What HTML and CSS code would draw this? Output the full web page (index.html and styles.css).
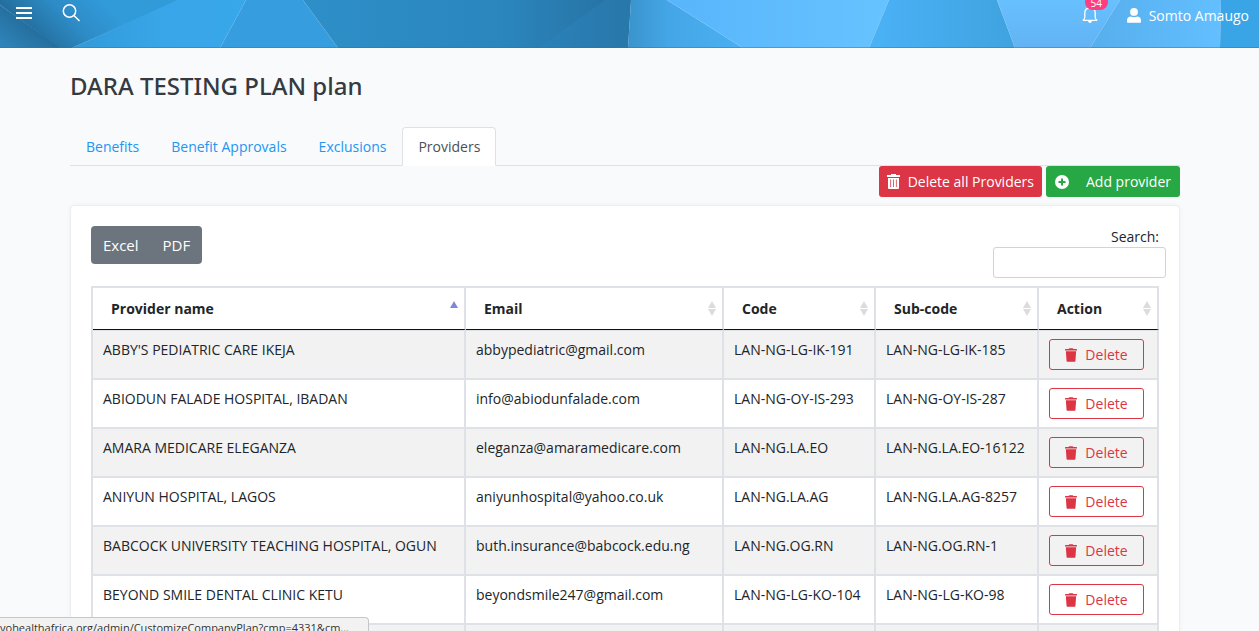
FILE: index.html
```html
<!DOCTYPE html>
<html lang="en">
<head>
<meta charset="utf-8">
<title>DARA TESTING PLAN plan</title>
<link rel="stylesheet" href="styles.css">
</head>
<body>
<svg class="sprite" aria-hidden="true">
  <symbol id="trash" viewBox="0 0 14 16"><path d="M4.200 1 4.600.4Q4.900 0 5.400 0h3.200q.5 0 .8.400l.4.600H13.500q.5 0 .5.500V2.700H0V1.500Q0 1 .5 1zM1 3.700h12l-.8 10.900q-.1 1.400-1.500 1.400H3.300q-1.400 0-1.500-1.400z"/></symbol>
</svg>
<div class="page">
  <header class="topbar">
    <svg class="topbar-art" viewBox="0 0 1259 48" preserveAspectRatio="none" aria-hidden="true">
      <defs>
        <linearGradient id="g1" gradientUnits="userSpaceOnUse" x1="30" y1="30" x2="80" y2="-20"><stop offset="0" stop-color="#246f9f"/><stop offset=".5" stop-color="#2d8bc5"/><stop offset="1" stop-color="#319ad9"/></linearGradient>
        <linearGradient id="g2" gradientUnits="userSpaceOnUse" x1="8" y1="48" x2="36" y2="12"><stop offset="0" stop-color="#2e83b8"/><stop offset="1" stop-color="#1f6592"/></linearGradient>
        <linearGradient id="g3"><stop offset="0" stop-color="#2e8fc8"/><stop offset=".6" stop-color="#2b86be"/><stop offset="1" stop-color="#26709f"/></linearGradient>
        <linearGradient id="g4"><stop offset="0" stop-color="#3a93cc"/><stop offset=".35" stop-color="#44a6e6"/><stop offset="1" stop-color="#4ab0f3"/></linearGradient>
        <linearGradient id="g5"><stop offset="0" stop-color="#58b5fb"/><stop offset="1" stop-color="#67c3ff"/></linearGradient>
        <linearGradient id="g6"><stop offset="0" stop-color="#4bb2f6"/><stop offset="1" stop-color="#40a3e0"/></linearGradient>
        <linearGradient id="g7" x2="0" y2="1"><stop offset="0" stop-color="#68c0ff"/><stop offset="1" stop-color="#62b3f3"/></linearGradient>
        <linearGradient id="g8"><stop offset="0" stop-color="#57aeec"/><stop offset="1" stop-color="#63bfff"/></linearGradient>
        <linearGradient id="g9"><stop offset="0" stop-color="#329ad8"/><stop offset=".5" stop-color="#38a5e8"/><stop offset="1" stop-color="#38a8eb"/></linearGradient>
      </defs>
      <path fill="url(#g1)" d="M0 0H180L72 48H60L0 5z"/>
      <path fill="url(#g2)" d="M0 5 61 48H0z"/>
      <path fill="url(#g9)" d="M177 0h69l-26 48H72z"/>
      <path fill="#369edf" d="M246 0h57l35 48H220z"/>
      <path fill="url(#g3)" d="M303 0h328l-3 48H338z"/>
      <path fill="#2d89c2" opacity=".3" d="M605 0h26l-3 48h-90z"/>
      <path fill="url(#g4)" d="M631 0h36l76 48H628z"/>
      <path fill="url(#g5)" d="M667 0h222l-20 48H743z"/>
      <path fill="url(#g6)" d="M889 0h108l18 48H869z"/>
      <path fill="url(#g7)" d="M997 0h123l-30 48h-75z"/>
      <path fill="url(#g8)" d="M1120 0h101l-1 48h-130z"/>
      <path fill="#39a4e6" d="M1221 0h38v48h-39z"/>
      <path fill="#1f78b4" opacity=".45" d="M0 47h1259v1H0z"/>
    </svg>
    <div class="topbar-group">
      <button class="icon-btn" aria-label="Menu"><svg width="16" height="12" viewBox="0 0 16 12"><path fill="#fff" d="M0 0h16v2H0zM0 5h16v2H0zM0 10h16v2H0z"/></svg></button>
      <button class="icon-btn" aria-label="Search"><svg width="18" height="18" viewBox="0 0 18 18" fill="none" stroke="#fff" stroke-width="1.500"><circle cx="7.500" cy="7" r="6.200"/><path d="m12 11.500 5.500 5.500"/></svg></button>
    </div>
    <div class="topbar-group topbar-user">
      <button class="icon-btn bell" aria-label="Notifications">
        <svg width="16" height="18" viewBox="0 0 16 18"><path fill="none" stroke="#fff" stroke-width="1.300" d="M.8 14.300Q2.800 13.500 2.800 11V7Q2.800 2 8 2t5.200 5v4q0 2.500 2 3.300z"/><path fill="#fff" d="M6 15h4q-.5 2-2 2t-2-2z"/></svg>
        <span class="badge">54</span>
      </button>
      <a class="user" href="#"><svg width="14" height="15" viewBox="0 0 14 15"><path fill="#fff" d="M7 0a3.800 3.800 0 1 1 0 7.800A3.800 3.800 0 0 1 7 0zM0 14v-1.500Q0 9 3.500 8.500 7 10 10.500 8.500 14 9 14 12.500V14q0 .7-.8.700H.8Q0 14.700 0 14z"/></svg>Somto Amaugo</a>
    </div>
  </header>

  <main class="container">
    <h1 class="title">DARA TESTING PLAN plan</h1>
    <nav class="tabs">
      <a class="tab" href="#">Benefits</a>
      <a class="tab" href="#">Benefit Approvals</a>
      <a class="tab" href="#">Exclusions</a>
      <a class="tab tab-active" href="#" aria-current="page">Providers</a>
    </nav>
    <div class="actions">
      <button class="btn btn-danger"><svg width="13" height="15" viewBox="0 0 13 15"><path fill="#fff" fill-rule="evenodd" d="M4 1V0h5v1h4v2H0V1zM1 4h11v10q0 1-1 1H2q-1 0-1-1zm2.300 1.500v7.500h.8V5.500zm2.800 0v7.500h.8V5.500zm2.800 0v7.500h.8V5.500z"/></svg>Delete all Providers</button>
      <button class="btn btn-success"><svg width="14" height="14" viewBox="0 0 14 14"><circle cx="7" cy="7" r="7" fill="#fff"/><path fill="#28a745" d="M6 3.500h2V6h2.500v2H8v2.500H6V8H3.500V6H6z"/></svg>Add provider</button>
    </div>

    <section class="card">
      <div class="toolbar">
        <div class="btn-group"><button class="export">Excel</button><button class="export">PDF</button></div>
        <div class="search"><label for="q">Search:</label><input id="q" type="search"></div>
      </div>
      <table class="grid">
        <colgroup><col><col class="c-email"><col class="c-code"><col class="c-sub"><col class="c-action"></colgroup>
        <thead>
          <tr>
            <th class="sorted">Provider name</th>
            <th>Email</th>
            <th>Code</th>
            <th>Sub-code</th>
            <th>Action</th>
          </tr>
        </thead>
        <tbody>
          <tr><td>ABBY'S PEDIATRIC CARE IKEJA</td><td>abbypediatric@gmail.com</td><td>LAN-NG-LG-IK-191</td><td>LAN-NG-LG-IK-185</td><td><button class="delete"><svg width="12" height="14"><use href="#trash"/></svg>Delete</button></td></tr>
          <tr><td>ABIODUN FALADE HOSPITAL, IBADAN</td><td>info@abiodunfalade.com</td><td>LAN-NG-OY-IS-293</td><td>LAN-NG-OY-IS-287</td><td><button class="delete"><svg width="12" height="14"><use href="#trash"/></svg>Delete</button></td></tr>
          <tr><td>AMARA MEDICARE ELEGANZA</td><td>eleganza@amaramedicare.com</td><td>LAN-NG.LA.EO</td><td>LAN-NG.LA.EO-16122</td><td><button class="delete"><svg width="12" height="14"><use href="#trash"/></svg>Delete</button></td></tr>
          <tr><td>ANIYUN HOSPITAL, LAGOS</td><td>aniyunhospital@yahoo.co.uk</td><td>LAN-NG.LA.AG</td><td>LAN-NG.LA.AG-8257</td><td><button class="delete"><svg width="12" height="14"><use href="#trash"/></svg>Delete</button></td></tr>
          <tr><td>BABCOCK UNIVERSITY TEACHING HOSPITAL, OGUN</td><td>buth.insurance@babcock.edu.ng</td><td>LAN-NG.OG.RN</td><td>LAN-NG.OG.RN-1</td><td><button class="delete"><svg width="12" height="14"><use href="#trash"/></svg>Delete</button></td></tr>
          <tr><td>BEYOND SMILE DENTAL CLINIC KETU</td><td>beyondsmile247@gmail.com</td><td>LAN-NG-LG-KO-104</td><td>LAN-NG-LG-KO-98</td><td><button class="delete"><svg width="12" height="14"><use href="#trash"/></svg>Delete</button></td></tr>
          <tr><td></td><td></td><td></td><td></td><td></td></tr>
        </tbody>
      </table>
    </section>
  </main>
  <div class="status">yohealthafrica.org/admin/CustomizeCompanyPlan?cmp=4331&amp;cm...</div>
</div>
</body>
</html>
```

FILE: styles.css
```css
* { box-sizing: border-box; }

body {
  margin: 0;
  background: #f9fafc;
  color: #212529;
  font: 14px/21px "Open Sans", "Noto Sans", sans-serif;
}

button, input { font: inherit; margin: 0; }
button { cursor: pointer; }
a { text-decoration: none; }
.sprite { display: none; }

.page {
  height: 100vh;
  overflow: hidden;
}

.topbar {
  position: relative;
  display: flex;
  justify-content: space-between;
  height: 48px;
  padding: 0 10px 0 16px;
}

.topbar-art {
  position: absolute;
  inset: 0;
  width: 100%;
  height: 100%;
}

.topbar-group {
  position: relative;
  display: flex;
  align-items: center;
  gap: 30px;
  height: 26px;
}

.topbar-user {
  gap: 29px;
  height: 30px;
}

.icon-btn {
  display: flex;
  padding: 0;
  border: 0;
  background: none;
}

.bell { position: relative; }

.badge {
  position: absolute;
  left: 3px;
  bottom: 14px;
  width: 23px;
  height: 16px;
  border-radius: 8px;
  background: #ff3d7f;
  color: #fff;
  font-size: 10px;
  line-height: 18px;
  text-align: center;
}

.user {
  display: flex;
  align-items: center;
  gap: 8px;
  color: #fff;
}

.container {
  max-width: 1149px;
  margin: 0 auto;
  padding: 23px 24px 0 15px;
}

.title {
  margin: 0 0 26px;
  color: #343a40;
  font-family: "Noto Sans", "Open Sans", sans-serif;
  font-size: 24px;
  font-weight: 500;
  line-height: 30px;
}

.tabs {
  display: flex;
  border-bottom: 1px solid #dee2e6;
}

.tab {
  margin-bottom: -1px;
  padding: 8px 15px;
  border: 1px solid transparent;
  border-radius: 4px 4px 0 0;
  color: #2196f3;
}

.tab-active {
  border-color: #dee2e6 #dee2e6 #fff;
  background: #fff;
  color: #495057;
}

.actions {
  display: flex;
  justify-content: flex-end;
  gap: 4px;
  margin-bottom: 8px;
}

.btn {
  display: flex;
  align-items: center;
  height: 31px;
  padding: 0 9px;
  border: 0;
  border-radius: 3px;
  color: #fff;
}

.btn-danger { gap: 8px; padding: 0 8px; background: #dc3545; }
.btn-success { gap: 17px; background: #28a745; }

.card {
  padding: 20px;
  border: 1px solid #eceef1;
  border-radius: 4px;
  background: #fff;
  box-shadow: 0 0 4px rgba(0, 0, 0, .04);
}

.toolbar {
  display: flex;
  justify-content: space-between;
  align-items: flex-start;
  margin-bottom: 8px;
}

.btn-group {
  display: flex;
  overflow: hidden;
  border-radius: 4px;
}

.export {
  height: 38px;
  padding: 0 12px;
  border: 0;
  background: #6c757d;
  color: #fff;
  font-size: 15px;
}

.search {
  display: flex;
  flex-direction: column;
  align-items: flex-end;
}

.search input {
  width: 173px;
  height: 31px;
  margin-right: -7px;
  padding: 4px 8px;
  border: 1px solid #ced4da;
  border-radius: 3px;
  background: #fff;
}

.grid {
  width: 100%;
  table-layout: fixed;
  border-collapse: separate;
  border-spacing: 0;
  border: 2px solid #dee2e6;
  border-width: 2px 0 0 2px;
}

.c-email { width: 258px; }
.c-code { width: 152px; }
.c-sub { width: 163px; }
.c-action { width: 120px; }

.grid th {
  position: relative;
  height: 42px;
  padding: 0 18px;
  border-right: 2px solid #dee2e6;
  border-bottom: 1px solid #111;
  font-weight: 700;
  text-align: left;
}

.grid th::before,
.grid th::after {
  content: "";
  position: absolute;
  right: 6px;
  border: 4px solid transparent;
}

.grid th::before {
  top: 13px;
  border-top: 0;
  border-bottom: 7px solid #dcdcdc;
}

.grid th::after {
  top: 21px;
  border-bottom: 0;
  border-top: 7px solid #dcdcdc;
}

.grid .sorted::before { border-bottom-color: #7f86de; }
.grid .sorted::after { display: none; }

.grid td {
  height: 49px;
  padding: 8px 8px 0 10px;
  border-right: 2px solid #dee2e6;
  border-bottom: 2px solid #dee2e6;
  vertical-align: top;
  white-space: nowrap;
}

.grid tbody tr:first-child td {
  height: 50px;
  border-top: 1px solid #dee2e6;
}

.grid tbody tr:nth-child(odd) { background: #f2f2f2; }

.delete {
  display: flex;
  align-items: center;
  justify-content: center;
  gap: 8px;
  width: 95px;
  height: 31px;
  padding: 0;
  border: 1px solid #dc3545;
  border-radius: 3px;
  background: transparent;
  color: #dc3545;
}

.delete svg { fill: #dc3545; }

.status {
  position: fixed;
  left: 0;
  bottom: 0;
  width: 369px;
  height: 14px;
  overflow: hidden;
  border: 1px solid #c4c7ca;
  border-width: 1px 1px 0 0;
  border-radius: 0 4px 0 0;
  background: #f2f2f2;
  color: #333;
  font-size: 11px;
  line-height: 20px;
  white-space: nowrap;
}
```
